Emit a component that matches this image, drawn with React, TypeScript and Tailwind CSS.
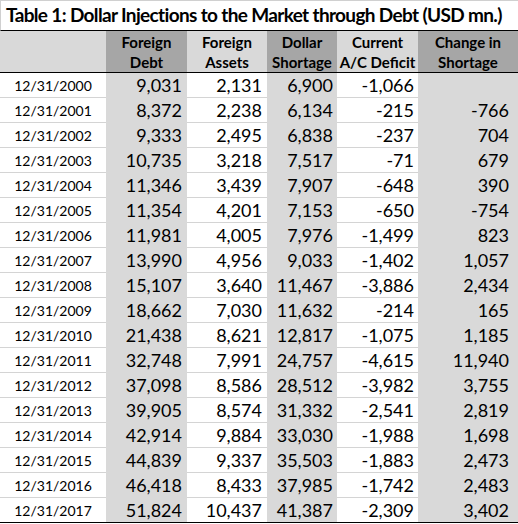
const rows: Array<[string, string, string, string, string, string]> = [
  ["12/31/2000", "9,031", "2,131", "6,900", "-1,066", ""],
  ["12/31/2001", "8,372", "2,238", "6,134", "-215", "-766"],
  ["12/31/2002", "9,333", "2,495", "6,838", "-237", "704"],
  ["12/31/2003", "10,735", "3,218", "7,517", "-71", "679"],
  ["12/31/2004", "11,346", "3,439", "7,907", "-648", "390"],
  ["12/31/2005", "11,354", "4,201", "7,153", "-650", "-754"],
  ["12/31/2006", "11,981", "4,005", "7,976", "-1,499", "823"],
  ["12/31/2007", "13,990", "4,956", "9,033", "-1,402", "1,057"],
  ["12/31/2008", "15,107", "3,640", "11,467", "-3,886", "2,434"],
  ["12/31/2009", "18,662", "7,030", "11,632", "-214", "165"],
  ["12/31/2010", "21,438", "8,621", "12,817", "-1,075", "1,185"],
  ["12/31/2011", "32,748", "7,991", "24,757", "-4,615", "11,940"],
  ["12/31/2012", "37,098", "8,586", "28,512", "-3,982", "3,755"],
  ["12/31/2013", "39,905", "8,574", "31,332", "-2,541", "2,819"],
  ["12/31/2014", "42,914", "9,884", "33,030", "-1,988", "1,698"],
  ["12/31/2015", "44,839", "9,337", "35,503", "-1,883", "2,473"],
  ["12/31/2016", "46,418", "8,433", "37,985", "-1,742", "2,483"],
  ["12/31/2017", "51,824", "10,437", "41,387", "-2,309", "3,402"],
];

const headers = [
  { lines: ["", ""], dark: false },
  { lines: ["Foreign", "Debt"], dark: true },
  { lines: ["Foreign", "Assets"], dark: false },
  { lines: ["Dollar", "Shortage"], dark: true },
  { lines: ["Current", "A/C Deficit"], dark: false },
  { lines: ["Change in", "Shortage"], dark: true },
];

// shaded body columns: 1, 3, 5
const bodyCell = [
  "bg-white border-b border-[#d4d4d4] justify-center text-[14px]",
  "bg-[#d9d9d9] justify-end pr-[5px] text-[18px]",
  "bg-white border-b border-[#d4d4d4] justify-end pr-[5px] text-[18px]",
  "bg-[#d9d9d9] justify-end pr-[4px] text-[18px]",
  "bg-white border-b border-[#d4d4d4] justify-end pr-[4px] text-[18px]",
  "bg-[#d9d9d9] justify-end pr-[9px] text-[18px]",
];

export default function App() {
  return (
    <div
      className="w-[518px] h-[524px] bg-white text-black overflow-hidden"
      style={{ fontFamily: "Lato, 'Open Sans', sans-serif" }}
    >
      <div className="h-[31px] border-t border-l border-[#d0d0d0] border-b-[1px] border-b-black flex items-center pl-[5px]">
        <span className="text-[19px] font-bold tracking-[-0.65px] whitespace-nowrap">
          Table 1: Dollar Injections to the Market through Debt (USD mn.)
        </span>
      </div>

      <div className="grid grid-cols-[106px_81px_80px_70px_81px_100px]">
        {headers.map((h, i) => (
          <div
            key={i}
            className={`h-[42px] border-b border-black flex flex-col items-center justify-center text-[15px] font-bold leading-[20px] ${
              h.dark ? "bg-[#a6a6a6]" : "bg-[#d9d9d9]"
            }`}
          >
            <span>{h.lines[0]}</span>
            <span className="whitespace-nowrap">{h.lines[1]}</span>
          </div>
        ))}

        {rows.map((row, r) =>
          row.map((value, c) => (
            <div
              key={`${r}-${c}`}
              className={`h-[25px] flex items-center ${bodyCell[c]} ${
                r === rows.length - 1 ? "!border-b-black border-b" : ""
              }`}
            >
              {value}
            </div>
          ))
        )}
      </div>
    </div>
  );
}
